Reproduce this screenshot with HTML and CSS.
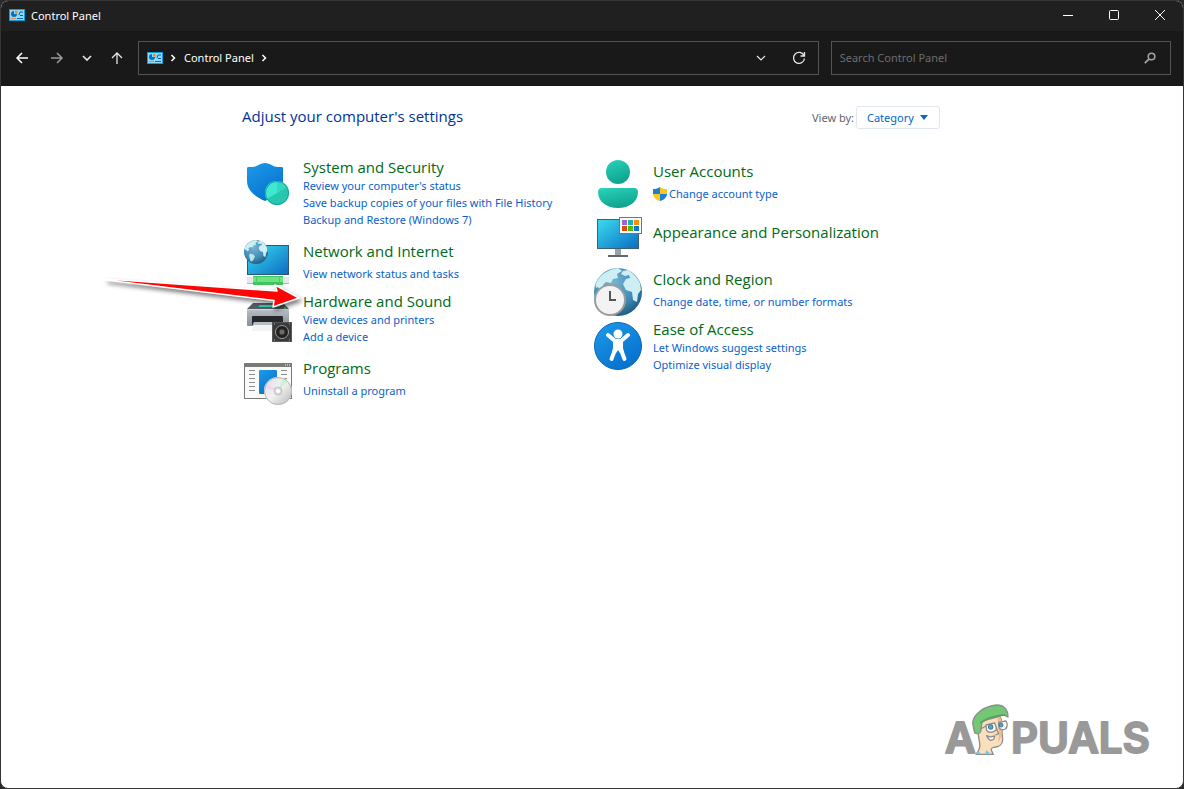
FILE: index.html
```html
<!DOCTYPE html>
<html lang="en">
<head>
    <meta charset="UTF-8">
    <meta name="viewport" content="width=device-width, initial-scale=1.0">
    <title>Control Panel</title>
    <link rel="stylesheet" href="styles.css">
</head>
<body>
    <!-- shared shapes and gradients -->
    <svg class="defs" width="0" height="0" aria-hidden="true">
        <defs>
            <linearGradient id="blue" x1="0" y1="0" x2="0.6" y2="1">
                <stop offset="0" stop-color="#1e9be8"/><stop offset="1" stop-color="#0672cf"/>
            </linearGradient>
            <linearGradient id="screen" x1="0" y1="0" x2="1" y2="1">
                <stop offset="0" stop-color="#3bdcf0"/><stop offset="1" stop-color="#0b6cc2"/>
            </linearGradient>
            <linearGradient id="teal" x1="0" y1="0" x2="0.4" y2="1">
                <stop offset="0" stop-color="#2bd3bd"/><stop offset="1" stop-color="#0fa48f"/>
            </linearGradient>
            <linearGradient id="silver" x1="0" y1="0" x2="0" y2="1">
                <stop offset="0" stop-color="#b9c0c7"/><stop offset="1" stop-color="#858e97"/>
            </linearGradient>
            <linearGradient id="disc" x1="0" y1="0" x2="1" y2="1">
                <stop offset="0" stop-color="#dfe1e3"/><stop offset="0.5" stop-color="#f1f1f1"/><stop offset="1" stop-color="#b3b6b8"/>
            </linearGradient>
            <radialGradient id="globe" cx="0.4" cy="0.3" r="0.8">
                <stop offset="0" stop-color="#75b5d3"/><stop offset="0.6" stop-color="#3f8bb5"/><stop offset="1" stop-color="#174d70"/>
            </radialGradient>
        </defs>
        <symbol id="cp-icon" viewBox="0 0 16 12">
            <rect width="16" height="12" fill="#129adf"/>
            <rect x="1" y="1" width="14" height="10" fill="#8fdafa"/>
            <path d="M5 2a3 3 0 1 0 3 3H5z" fill="#0a6fc0"/>
            <path d="M6 1.500a3 3 0 0 1 3 3H6z" fill="#f58a1f"/>
            <path d="M10 6l1-3h3M11 6.500h3" fill="none" stroke="#0a5da8"/>
            <path d="M2 9.500h5" stroke="#f58a1f"/>
            <path d="M8 9.500h6" stroke="#0a6fc0"/>
        </symbol>
        <symbol id="globe-icon" viewBox="0 0 48 48">
            <circle cx="24" cy="24" r="24" fill="url(#globe)"/>
            <path d="M5 10C10 4 17 1 24 0l4 3-5 3 1 4-5 1-2 4-5-1-3 3 1 3-3 3-3-4-2 1C1 17 2 14 5 10z" fill="#cdeef2"/>
            <path d="M29 3l5-1c5 3 9 7 12 13l1 7-3 4-1 8-4-2-1-8-6-2-3-6 3-5 4-1-1-3-4 1-4-2z" fill="#cdeef2"/>
            <path d="M13 27l6 2 3 4-3 6-3 4-3-1-2-7-1-5z" fill="#b9e3ea"/>
        </symbol>
    </svg>

    <div class="window">
        <header class="titlebar">
            <svg class="app-icon" width="16" height="12"><use href="#cp-icon"/></svg>
            <h1>Control Panel</h1>
            <div class="window-buttons">
                <button type="button" aria-label="Minimize">
                    <svg width="12" height="12"><path d="M1 6.500h10" stroke="#fff"/></svg>
                </button>
                <button type="button" aria-label="Maximize">
                    <svg width="12" height="12"><rect x="1.500" y="1.500" width="9" height="9" rx="1" fill="none" stroke="#fff"/></svg>
                </button>
                <button type="button" aria-label="Close">
                    <svg width="12" height="12"><path d="M1 1l10 10M11 1L1 11" stroke="#fff"/></svg>
                </button>
            </div>
        </header>

        <nav class="toolbar" aria-label="Navigation">
            <div class="history">
                <button type="button" aria-label="Back">
                    <svg width="14" height="14"><path d="M13 7H2M7 2L2 7l5 5" fill="none" stroke="#fff" stroke-width="1.500"/></svg>
                </button>
                <button type="button" aria-label="Forward">
                    <svg width="14" height="14"><path d="M1 7h11M7 2l5 5-5 5" fill="none" stroke="#9a9a9a" stroke-width="1.500"/></svg>
                </button>
                <button type="button" aria-label="Recent locations">
                    <svg width="10" height="14"><path d="M1 5l4 4 4-4" fill="none" stroke="#e6e6e6" stroke-width="1.600"/></svg>
                </button>
                <button type="button" aria-label="Up">
                    <svg width="14" height="14"><path d="M7 13V2M2 7l5-5 5 5" fill="none" stroke="#e6e6e6" stroke-width="1.300"/></svg>
                </button>
            </div>
            <div class="address">
                <svg width="16" height="12"><use href="#cp-icon"/></svg>
                <svg class="crumb-arrow" width="6" height="8"><path d="M1.500 1l3 3-3 3" fill="none" stroke="#fff" stroke-width="1.500"/></svg>
                <a href="#">Control Panel</a>
                <svg class="crumb-arrow" width="6" height="8"><path d="M1.500 1l3 3-3 3" fill="none" stroke="#fff" stroke-width="1.500"/></svg>
                <div class="address-buttons">
                    <button type="button" aria-label="Previous locations">
                        <svg width="10" height="10"><path d="M1 3l4 4 4-4" fill="none" stroke="#e6e6e6" stroke-width="1.200"/></svg>
                    </button>
                    <button type="button" aria-label="Refresh">
                        <svg width="14" height="14"><path d="M12 4.500A5.500 5.500 0 1 0 12.500 7.500M12.500 1v4h-4" fill="none" stroke="#e6e6e6" stroke-width="1.300"/></svg>
                    </button>
                </div>
            </div>
            <div class="search">
                <input type="text" placeholder="Search Control Panel" aria-label="Search Control Panel">
                <svg width="12" height="12"><circle cx="7.500" cy="4.500" r="3.300" fill="none" stroke="#a0a0a0" stroke-width="1.600"/><path d="M5 7L.8 11.200" stroke="#a0a0a0" stroke-width="1.800"/></svg>
            </div>
        </nav>

        <main>
            <div class="heading">
                <h2>Adjust your computer's settings</h2>
                <div class="view-by">
                    <label for="view">View by:</label>
                    <div class="select">
                        <select id="view">
                            <option>Category</option>
                            <option>Large icons</option>
                            <option>Small icons</option>
                        </select>
                        <svg width="8" height="5"><path d="M0 0h8L4 5z" fill="#0066cc"/></svg>
                    </div>
                </div>
            </div>

            <div class="categories">
                <div class="column">
                    <section class="category">
                        <svg class="icon" viewBox="0 0 48 48">
                            <path d="M21 3c5 0 8 4 13 4 2 0 5-.5 5 1v13c0 10-9 16-18 20C12 37 3 31 3 21V8c0-1.500 3-1 5-1 5 0 8-4 13-4z" fill="url(#blue)"/>
                            <circle cx="33" cy="33" r="12" fill="#27c6ae"/>
                            <path d="M33 33V21a12 12 0 0 0-10.400 18z" fill="#3fe8d3"/>
                            <path d="M33 33V21a12 12 0 0 1 10.400 6z" fill="#35d8c2"/>
                            <circle cx="33" cy="33" r="11.500" fill="none" stroke="#14a695"/>
                        </svg>
                        <div class="text">
                            <h3><a href="#">System and Security</a></h3>
                            <a href="#">Review your computer's status</a>
                            <a href="#">Save backup copies of your files with File History</a>
                            <a href="#">Backup and Restore (Windows 7)</a>
                        </div>
                    </section>
                    <section class="category single">
                        <svg class="icon" viewBox="0 0 48 48">
                            <rect x="3.500" y="5.500" width="41" height="29" fill="url(#screen)" stroke="#2b5878"/>
                            <rect x="3" y="37" width="42" height="7" fill="#e5e8ea"/>
                            <path d="M3 43.500h42" stroke="#b3b7ba"/>
                            <rect x="9" y="36" width="30" height="9" fill="#3dc65a"/>
                            <rect x="9" y="37" width="30" height="5" fill="#6fe083"/>
                            <path d="M12.500 36v9M35.500 36v9" stroke="#4cc968"/>
                            <use href="#globe-icon" width="24" height="24"/>
                        </svg>
                        <div class="text">
                            <h3><a href="#">Network and Internet</a></h3>
                            <a href="#">View network status and tasks</a>
                        </div>
                    </section>
                    <section class="category">
                        <svg class="icon" viewBox="0 0 48 48">
                            <path d="M9 9h30l6 6H3z" fill="#565b60"/>
                            <path d="M16 11h18l2 2H14z" fill="#31c4ba"/>
                            <rect x="3" y="15" width="42" height="17" rx="1" fill="url(#silver)"/>
                            <path d="M3 15.500h42" stroke="#d3d8dc"/>
                            <rect x="8" y="22" width="31" height="9" rx="1" fill="#26292c"/>
                            <path d="M10 28h26v9H8z" fill="#f2f3f4"/>
                            <path d="M10 28h26v3H9z" fill="#b9bdc1"/>
                            <circle cx="41" cy="14" r="1" fill="#25e04a"/>
                            <rect x="28" y="28" width="20" height="20" rx="1" fill="#3a3a3a"/>
                            <rect x="28.500" y="28.500" width="19" height="19" rx="1" fill="none" stroke="#575757"/>
                            <circle cx="38" cy="38" r="6.500" fill="#202020" stroke="#9b9b9b"/>
                            <circle cx="38" cy="38" r="3" fill="#6c6c6c" stroke="#333"/>
                            <path d="M30 30h1M45 30h1M30 46h1M45 46h1" stroke="#aaa"/>
                        </svg>
                        <div class="text">
                            <h3><a href="#">Hardware and Sound</a></h3>
                            <a href="#">View devices and printers</a>
                            <a href="#">Add a device</a>
                        </div>
                        <svg class="pointer" viewBox="0 0 210 50" aria-hidden="true">
                            <path d="M6 14L177 26 175 20l24 13-26 9 1-6.500L6 15z" fill="#fb0505" stroke="#fff" stroke-width="1.500" stroke-linejoin="round"/>
                        </svg>
                    </section>
                    <section class="category single">
                        <svg class="icon" viewBox="0 0 48 48">
                            <rect x="0.500" y="6.500" width="47" height="35" fill="#fafafa" stroke="#7a7975"/>
                            <path d="M0 6h48v4H0z" fill="#7a7975"/>
                            <path d="M41 8h1M43 8h1M45 8h1" stroke="#fff"/>
                            <path d="M5 13.500h6M5 17.500h6M5 21.500h6M5 25.500h6M5 29.500h6M5 33.500h6M37 13.500h6M37 17.500h6M37 21.500h6" stroke="#8b8b8b"/>
                            <rect x="15" y="13" width="18" height="24" rx="1" fill="url(#blue)"/>
                            <circle cx="34" cy="34" r="14" fill="url(#disc)"/>
                            <path d="M34 34l-13.500-3a14 14 0 0 1 2-5z" fill="#f2d5f2"/>
                            <path d="M34 34l5-13a14 14 0 0 1 5 3z" fill="#d0f0d6"/>
                            <circle cx="34" cy="34" r="13.500" fill="none" stroke="#b5b8ba"/>
                            <circle cx="34" cy="34" r="4" fill="#d7d9db" stroke="#bfc3c6"/>
                            <circle cx="34" cy="34" r="2" fill="#fff"/>
                        </svg>
                        <div class="text">
                            <h3><a href="#">Programs</a></h3>
                            <a href="#">Uninstall a program</a>
                        </div>
                    </section>
                </div>

                <div class="column">
                    <section class="category single">
                        <svg class="icon" viewBox="0 0 48 48">
                            <circle cx="24" cy="12" r="12" fill="url(#teal)"/>
                            <path d="M8 28h32c3 0 4 2 4 4 0 10-9 16-20 16S4 42 4 32c0-2 1-4 4-4z" fill="url(#teal)"/>
                        </svg>
                        <div class="text">
                            <h3><a href="#">User Accounts</a></h3>
                            <a href="#" class="shielded">
                                <svg width="14" height="14" viewBox="0 0 14 14">
                                    <path d="M7 0C5 1.500 3 2 0 2v5h7z" fill="#1b7fd6"/>
                                    <path d="M7 0c2 1.500 4 2 7 2v5H7z" fill="#fcc919"/>
                                    <path d="M0 7c0 3 3 6 7 7V7z" fill="#fcc919"/>
                                    <path d="M14 7c0 3-3 6-7 7V7z" fill="#1b7fd6"/>
                                </svg>
                                Change account type
                            </a>
                        </div>
                    </section>
                    <section class="category bare">
                        <svg class="icon" viewBox="0 0 48 48">
                            <path d="M21 35h6v6h-6z" fill="#98a2ab"/>
                            <path d="M14 41h20v2H14z" fill="#5f6870"/>
                            <rect x="3.500" y="5.500" width="41" height="29" fill="url(#screen)" stroke="#3c6076"/>
                            <rect x="25.500" y="3.500" width="22" height="16" fill="#fff" stroke="#757575"/>
                            <path d="M28 6h5v5h-5z" fill="#9b64d0"/>
                            <path d="M34 6h5v5h-5z" fill="#1cb4a5"/>
                            <path d="M40 6h5v5h-5z" fill="#ff8f0a"/>
                            <path d="M28 12h5v5h-5z" fill="#dd4b0f"/>
                            <path d="M34 12h5v5h-5z" fill="#55b512"/>
                            <path d="M40 12h5v5h-5z" fill="#0c78d4"/>
                        </svg>
                        <div class="text">
                            <h3><a href="#">Appearance and Personalization</a></h3>
                        </div>
                    </section>
                    <section class="category single">
                        <svg class="icon" viewBox="0 0 48 48">
                            <use href="#globe-icon" width="48" height="48"/>
                            <circle cx="16" cy="32" r="15" fill="#f3f3f3" stroke="#9c9c9c" stroke-width="2"/>
                            <path d="M16 23v9h6" fill="none" stroke="#555" stroke-width="2"/>
                        </svg>
                        <div class="text">
                            <h3><a href="#">Clock and Region</a></h3>
                            <a href="#">Change date, time, or number formats</a>
                        </div>
                    </section>
                    <section class="category">
                        <svg class="icon" viewBox="0 0 48 48">
                            <circle cx="24" cy="24" r="23.500" fill="url(#blue)" stroke="#0a68bd"/>
                            <circle cx="24" cy="12" r="4.500" fill="#fff"/>
                            <path d="M14 13l7 6h6l7-6M20.500 29l-3 8M27.500 29l3 8" fill="none" stroke="#fff" stroke-width="4" stroke-linecap="round" stroke-linejoin="round"/>
                            <path d="M19 18h10v8l1 5h-4l-2-3-2 3h-4l1-5z" fill="#fff"/>
                        </svg>
                        <div class="text">
                            <h3><a href="#">Ease of Access</a></h3>
                            <a href="#">Let Windows suggest settings</a>
                            <a href="#">Optimize visual display</a>
                        </div>
                    </section>
                </div>
            </div>
        </main>

        <svg class="watermark" viewBox="0 0 220 70" role="img" aria-label="Appuals">
            <g class="wordmark">
                <text x="1" y="51">A</text>
                <text x="67" y="51">PUALS</text>
            </g>
            <g transform="scale(.3333) translate(-42 -21)" stroke="#8d8d8d" stroke-width="4" stroke-linejoin="round">
                <path d="M138 178c10-12 13-22 11-33l-5-32c-2-22 10-34 28-39l38-10c5 10 8 30 6 48l2 22c0 14-12 22-27 23-7 1-9 7-5 13l4 8z" fill="#f9dfbb"/>
                <path d="M202 68l9-2c5 12 6 34 3 56l-9 22c2-20 1-50-3-76z" fill="#f5b98e" stroke="none"/>
                <path d="M128 84c2-24 30-50 72-54 22 0 34 14 34 36-8-6-18-8-30-4-20 6-38 12-48 20l-4 28c-4 6-12 8-18 4z" fill="#72c874"/>
                <path d="M150 84c18-14 46-22 74-24" fill="none" stroke="#4da853"/>
                <path d="M168 90l26-6 6 18c-4 10-24 14-30 4zM206 82l22-4c5 8 4 18-2 24-6 4-16 2-19-4z" fill="#fff"/>
                <path d="M152 102l16-9" fill="none"/>
                <circle cx="182" cy="96" r="7" fill="#4aa8dc" stroke="#456c88" stroke-width="3"/>
                <circle cx="213" cy="90" r="6" fill="#4aa8dc" stroke="#456c88" stroke-width="3"/>
                <path d="M198 98l8 18-10 4" fill="none"/>
                <path d="M170 122c8 5 16 4 24 1-1 14-15 20-24-1z" fill="#fff"/>
                <path d="M137 178l6-10 12 10zM164 178l6-12 12 12z" fill="#70c7ee" stroke="none"/>
            </g>
        </svg>
    </div>
</body>
</html>
```
FILE: styles.css
```css
* {
    box-sizing: border-box;
}
body {
    margin: 0;
    background: #2b2929;
    font-family: "Noto Sans", "Open Sans", sans-serif;
    font-size: 11px;
}
h1, h2, h3 {
    margin: 0;
    font-weight: normal;
}
h2, h3 {
    font-family: "Open Sans", "Noto Sans", sans-serif;
}
a {
    color: #0a5fcb;
    text-decoration: none;
}
a:hover {
    text-decoration: underline;
}
button {
    display: flex;
    align-items: center;
    justify-content: center;
    padding: 0;
    border: none;
    background: none;
}
svg {
    display: block;
    flex-shrink: 0;
}
.defs {
    position: absolute;
}
.window {
    position: relative;
    display: flex;
    flex-direction: column;
    min-height: 100vh;
    border: 1px solid #353535;
    border-radius: 8px;
    background: #fff;
    overflow: hidden;
}

/* title bar */
.titlebar {
    display: flex;
    align-items: center;
    height: 30px;
    padding: 0 0 2px 8px;
    background: #202020;
    color: #fff;
}
.titlebar h1 {
    margin-left: 6px;
    font-size: 11px;
}
.window-buttons {
    display: flex;
    margin-left: auto;
}
.window-buttons button {
    width: 46px;
    height: 28px;
}

/* toolbar */
.toolbar {
    display: grid;
    grid-template-columns: auto 2fr 1fr;
    gap: 12px;
    align-items: center;
    height: 55px;
    padding: 0 12px 2px 6px;
    background: #191919;
}
.history {
    display: flex;
    margin-right: -6px;
}
.history button {
    width: 30px;
    height: 30px;
}
.history button:first-child {
    margin-right: 5px;
}
.address, .search {
    display: flex;
    align-items: center;
    height: 34px;
    border: 1px solid #535353;
    color: #fff;
}
.address {
    padding-left: 8px;
}
.address a {
    color: #fff;
}
.crumb-arrow {
    margin: 0 8px 0 7px;
}
.address-buttons {
    display: flex;
    margin-left: auto;
}
.address-buttons button {
    width: 38px;
    height: 32px;
}
.search {
    padding: 0 14px 0 8px;
}
.search input {
    flex: 1;
    min-width: 0;
    padding: 0;
    border: none;
    outline: none;
    background: none;
    color: #fff;
    font: inherit;
}
.search input::placeholder {
    color: #6d6d6d;
}

/* content */
main {
    width: 100%;
    max-width: 700px;
    margin: 0 auto;
    padding-top: 20px;
}
.heading {
    display: flex;
    align-items: center;
    justify-content: space-between;
    height: 23px;
    padding-right: 2px;
    margin-bottom: 31px;
}
.heading h2 {
    padding-bottom: 3px;
    color: #003399;
    font-size: 15px;
}
.view-by {
    display: flex;
    align-items: center;
    gap: 2px;
    color: #5f6670;
}
.select {
    position: relative;
}
.select select {
    appearance: none;
    width: 84px;
    height: 23px;
    padding: 0 10px;
    border: 1px solid #dfe5f1;
    border-radius: 3px;
    background: #fff;
    color: #0066cc;
    font: inherit;
}
.select svg {
    position: absolute;
    top: 9px;
    right: 12px;
    pointer-events: none;
}
.categories {
    display: grid;
    grid-template-columns: 350px 1fr;
    padding-left: 2px;
}
.category {
    position: relative;
    display: flex;
    gap: 11px;
    min-height: 54px;
}
.icon {
    width: 48px;
    height: 48px;
}
.text {
    display: flex;
    flex-direction: column;
    align-items: flex-start;
    padding-bottom: 12px;
    line-height: 17px;
}
.text h3 {
    margin-bottom: 3px;
    font-size: 15px;
    line-height: 14px;
}
.text h3 a {
    color: #006a14;
}
.single .text {
    padding-top: 4px;
}
.single h3 {
    margin-bottom: 7px;
}
.bare .text {
    padding-top: 11px;
}
.shielded {
    display: flex;
    align-items: center;
    gap: 2px;
}

/* red arrow over the printer icon */
.pointer {
    position: absolute;
    top: -29px;
    left: -144px;
    width: 210px;
    height: 50px;
    filter: drop-shadow(2px 3px 2px rgba(0, 0, 0, 0.5));
    pointer-events: none;
}
.watermark {
    position: absolute;
    right: 19px;
    bottom: 16px;
    width: 220px;
    height: 70px;
}
.wordmark {
    fill: #999;
    stroke: #999;
    stroke-width: 2px;
    stroke-linejoin: round;
    font-family: Inter, sans-serif;
    font-size: 42px;
    font-weight: 600;
}
```
